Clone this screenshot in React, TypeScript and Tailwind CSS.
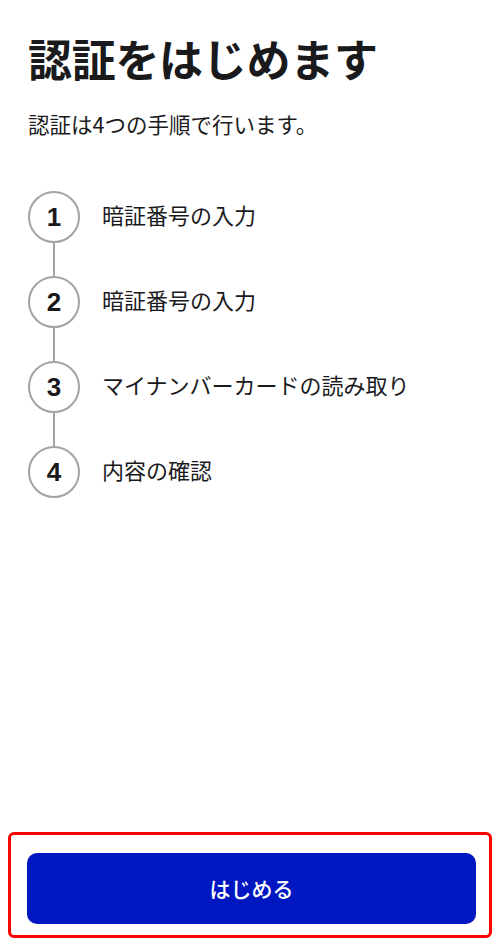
const steps = ['暗証番号の入力', '暗証番号の入力', 'マイナンバーカードの読み取り', '内容の確認']

export default function App() {
  return (
    <div
      className="flex min-h-[948px] flex-col bg-white text-[#1a1a1c]"
      style={{ fontFamily: '"Noto Sans CJK JP", "Noto Sans", sans-serif' }}
    >
      <main className="flex-1 px-7 pt-[32px]">
        <h1 className="text-[44px] font-bold leading-[1.2] tracking-[-0.3px]">認証をはじめます</h1>
        <p className="mt-[24px] text-[21.5px] leading-[1.4]">認証は4つの手順で行います。</p>

        <ol className="mt-[52px] flex flex-col">
          {steps.map((label, i) => (
            <li key={i} className="flex">
              <div className="flex flex-col items-center">
                <span
                  className="grid h-[52px] w-[52px] place-items-center rounded-full border-2 border-[#a3a3a3] text-[26px] font-bold leading-none"
                  style={{ fontFamily: '"Liberation Sans", Arial, sans-serif' }}
                >
                  {i + 1}
                </span>
                {i < steps.length - 1 && <span className="h-[33px] w-[2px] bg-[#a3a3a3]" />}
              </div>
              <span className="ml-[22px] mt-[8px] text-[22px] leading-[1.4]">{label}</span>
            </li>
          ))}
        </ol>
      </main>

      <footer className="mx-2 mb-[10px] rounded-[6px] border-[3px] border-[#ff0000] pb-[11px] pl-[16px] pr-[13px] pt-[18px]">
        <button className="h-[71px] w-full rounded-[10px] bg-[#0017c1] text-[21px] font-medium text-white">
          はじめる
        </button>
      </footer>
    </div>
  )
}
